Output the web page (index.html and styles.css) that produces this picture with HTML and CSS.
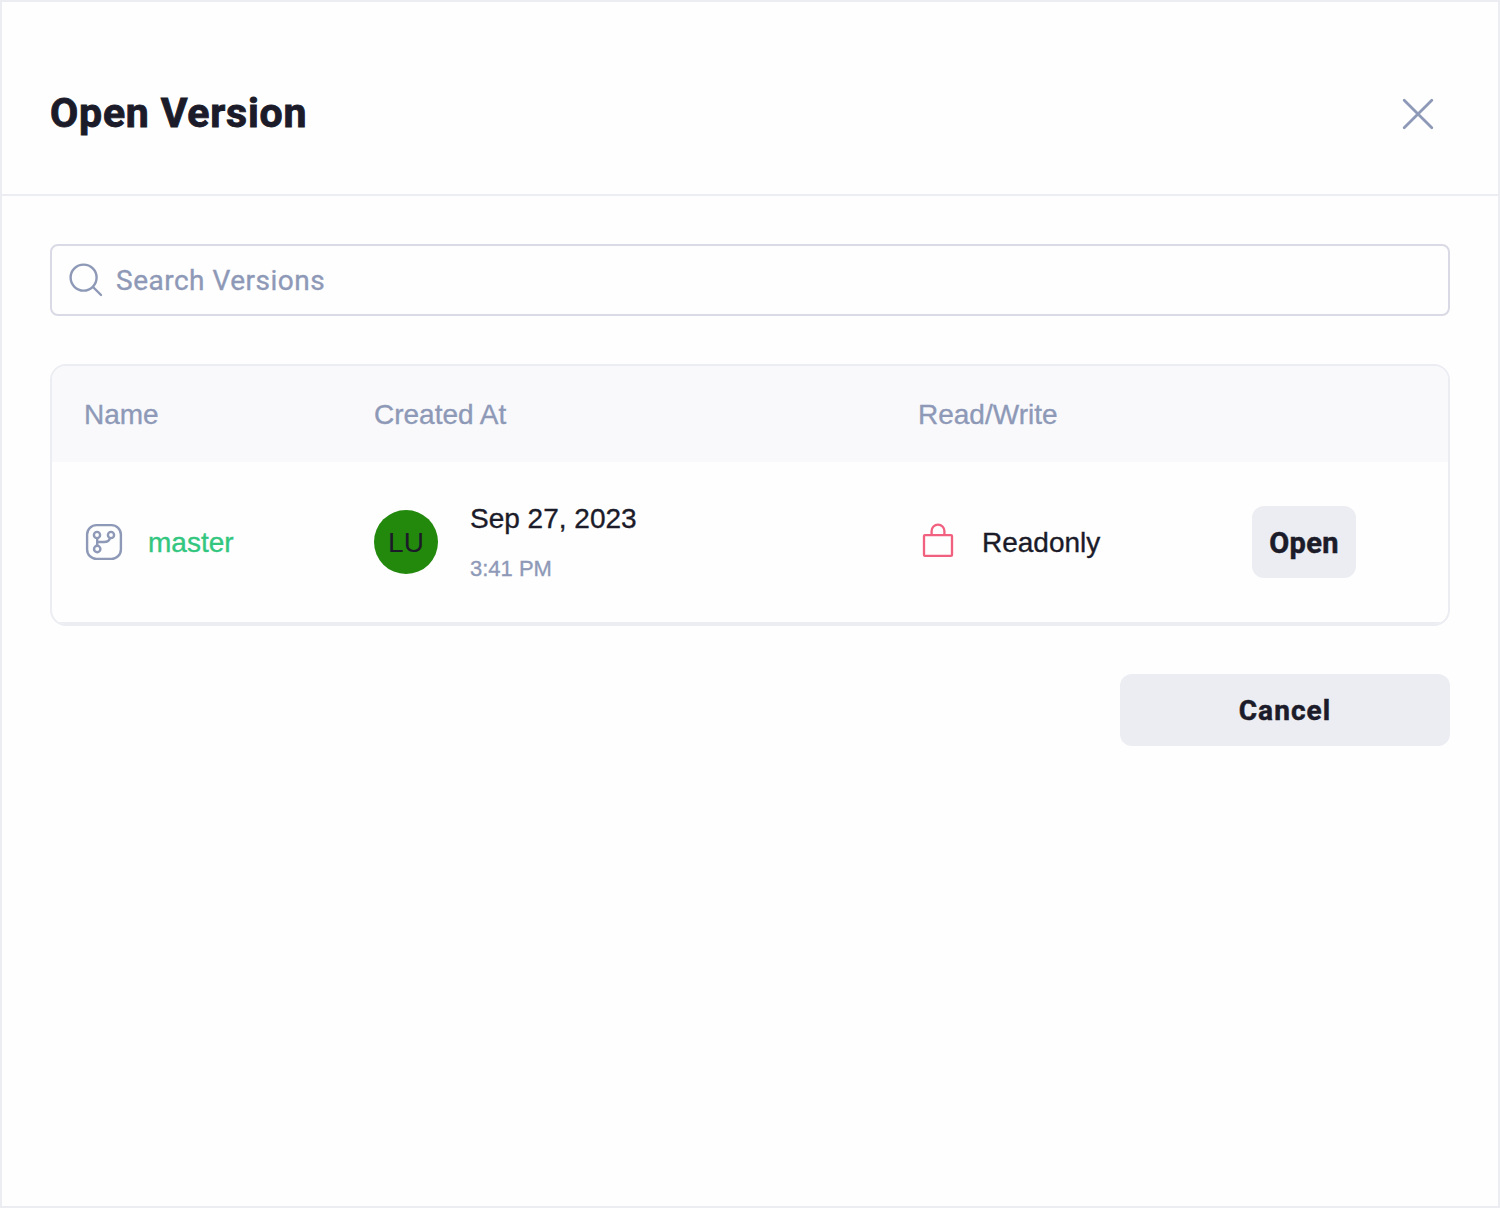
FILE: index.html
```html
<!DOCTYPE html>
<html lang="en">
<head>
  <meta charset="utf-8">
  <title>Open Version</title>
  <link rel="stylesheet" href="styles.css">
</head>
<body>
  <main class="dialog">
    <header class="dialog-header">
      <h1 class="title">Open Version</h1>
      <button class="close" aria-label="Close">
        <svg width="32" height="32" viewBox="0 0 32 32" fill="none" stroke="currentColor" stroke-width="2.8" stroke-linecap="round"><path d="M2.200 2.200L29.800 29.800M29.800 2.200L2.200 29.800"/></svg>
      </button>
    </header>
    <section class="content">
      <label class="search">
        <svg class="search-icon" width="36" height="36" viewBox="0 0 36 36" fill="none" stroke="currentColor" stroke-width="2.4" stroke-linecap="round"><circle cx="15.6" cy="15.6" r="13"/><path d="M25 25L33 33"/></svg>
        <span class="placeholder">Search Versions</span>
      </label>
      <div class="table">
        <div class="row table-head">
          <span>Name</span><span>Created At</span><span>Read/Write</span><span></span>
        </div>
        <div class="row table-row">
          <div class="name">
            <svg width="40" height="40" viewBox="0 0 40 40" fill="none" stroke="currentColor" stroke-width="2.4"><rect x="3.1" y="3.1" width="33.8" height="33.8" rx="9.500"/><circle cx="13" cy="13" r="3.1"/><circle cx="27" cy="13" r="3.1"/><circle cx="13.2" cy="27" r="3.2"/><path d="M13.200 16V24M14 20H20C23.500 20 25.500 18.500 26 16"/></svg>
            <a class="link">master</a>
          </div>
          <div class="created">
            <span class="avatar">LU</span>
            <div class="stamp"><span class="date">Sep 27, 2023</span><span class="time">3:41 PM</span></div>
          </div>
          <div class="access">
            <svg class="lock" width="40" height="40" viewBox="0 0 40 40" fill="none" stroke="currentColor" stroke-width="2.3"><rect x="6" y="13.100" width="28" height="20.800" rx="1"/><path d="M13.600 13V9A6.400 6.400 0 0 1 26.400 9V13"/></svg>
            <span class="mode">Readonly</span>
          </div>
          <button class="button open">Open</button>
        </div>
      </div>
      <button class="button cancel">Cancel</button>
    </section>
  </main>
</body>
</html>
```
FILE: styles.css
```css
* { box-sizing: border-box; }
body {
  margin: 0;
  background: #fefefe;
  color: #1b1b29;
  font: 28px/32px "Liberation Sans", Arial, sans-serif;
  -webkit-text-stroke: 0.35px;
}
button { border: 0; padding: 0; background: none; color: inherit; }
svg { display: block; flex: none; }
.dialog { min-height: 1208px; border: 2px solid #ecedf2; }
.dialog-header {
  display: flex;
  align-items: center;
  justify-content: space-between;
  height: 194px;
  padding: 32px 64px 0 48px;
  border-bottom: 2px solid #ecedf2;
}
.title {
  margin: 0;
  padding-bottom: 2px;
  font: 700 41px/48px Roboto, sans-serif;
  letter-spacing: 0.8px;
  -webkit-text-stroke: 0.9px;
}
.close { color: #8e99b7; }
.content { display: flex; flex-direction: column; padding: 48px; }
.search {
  display: flex;
  align-items: center;
  gap: 12px;
  height: 72px;
  padding: 0 16px;
  border: 2px solid #d9dae5;
  border-radius: 8px;
  color: #8e99b7;
}
.placeholder {
  padding-top: 2px;
  font: 400 28px/32px Roboto, sans-serif;
  letter-spacing: 0.5px;
}
.table {
  margin: 48px 0;
  border: 2px solid #ecedf2;
  border-radius: 16px;
  overflow: hidden;
}
.row {
  display: grid;
  grid-template-columns: 290px 544px 334px 1fr;
  align-items: center;
  padding-left: 32px;
}
.table-head { height: 96px; padding-top: 2px; background: #f9f9fc; color: #8e99b7; }
.table-row { height: 162px; border-bottom: 2px solid #ecedf2; }
.name { display: flex; align-items: center; gap: 24px; color: #8e99b7; }
.link { padding-top: 2px; color: #32c67f; }
.created { display: flex; align-items: center; gap: 32px; }
.avatar {
  display: grid;
  place-items: center;
  width: 64px;
  height: 64px;
  padding-top: 2px;
  border-radius: 50%;
  background: #23890d;
  -webkit-text-stroke: 0;
}
.stamp { display: flex; flex-direction: column; gap: 20px; padding-top: 2px; }
.time { color: #8e99b7; font-size: 22px; line-height: 28px; }
.access { display: flex; align-items: center; gap: 24px; }
.mode { padding-top: 2px; }
.lock { color: #f1617f; }
.button {
  height: 72px;
  padding-top: 2px;
  border-radius: 12px;
  background: #ecedf2;
  font: 700 28px/32px Roboto, sans-serif;
  -webkit-text-stroke: 0.5px;
}
.open { width: 104px; font-size: 29px; letter-spacing: 0.3px; }
.cancel { align-self: flex-end; width: 330px; letter-spacing: 1.1px; }
```
